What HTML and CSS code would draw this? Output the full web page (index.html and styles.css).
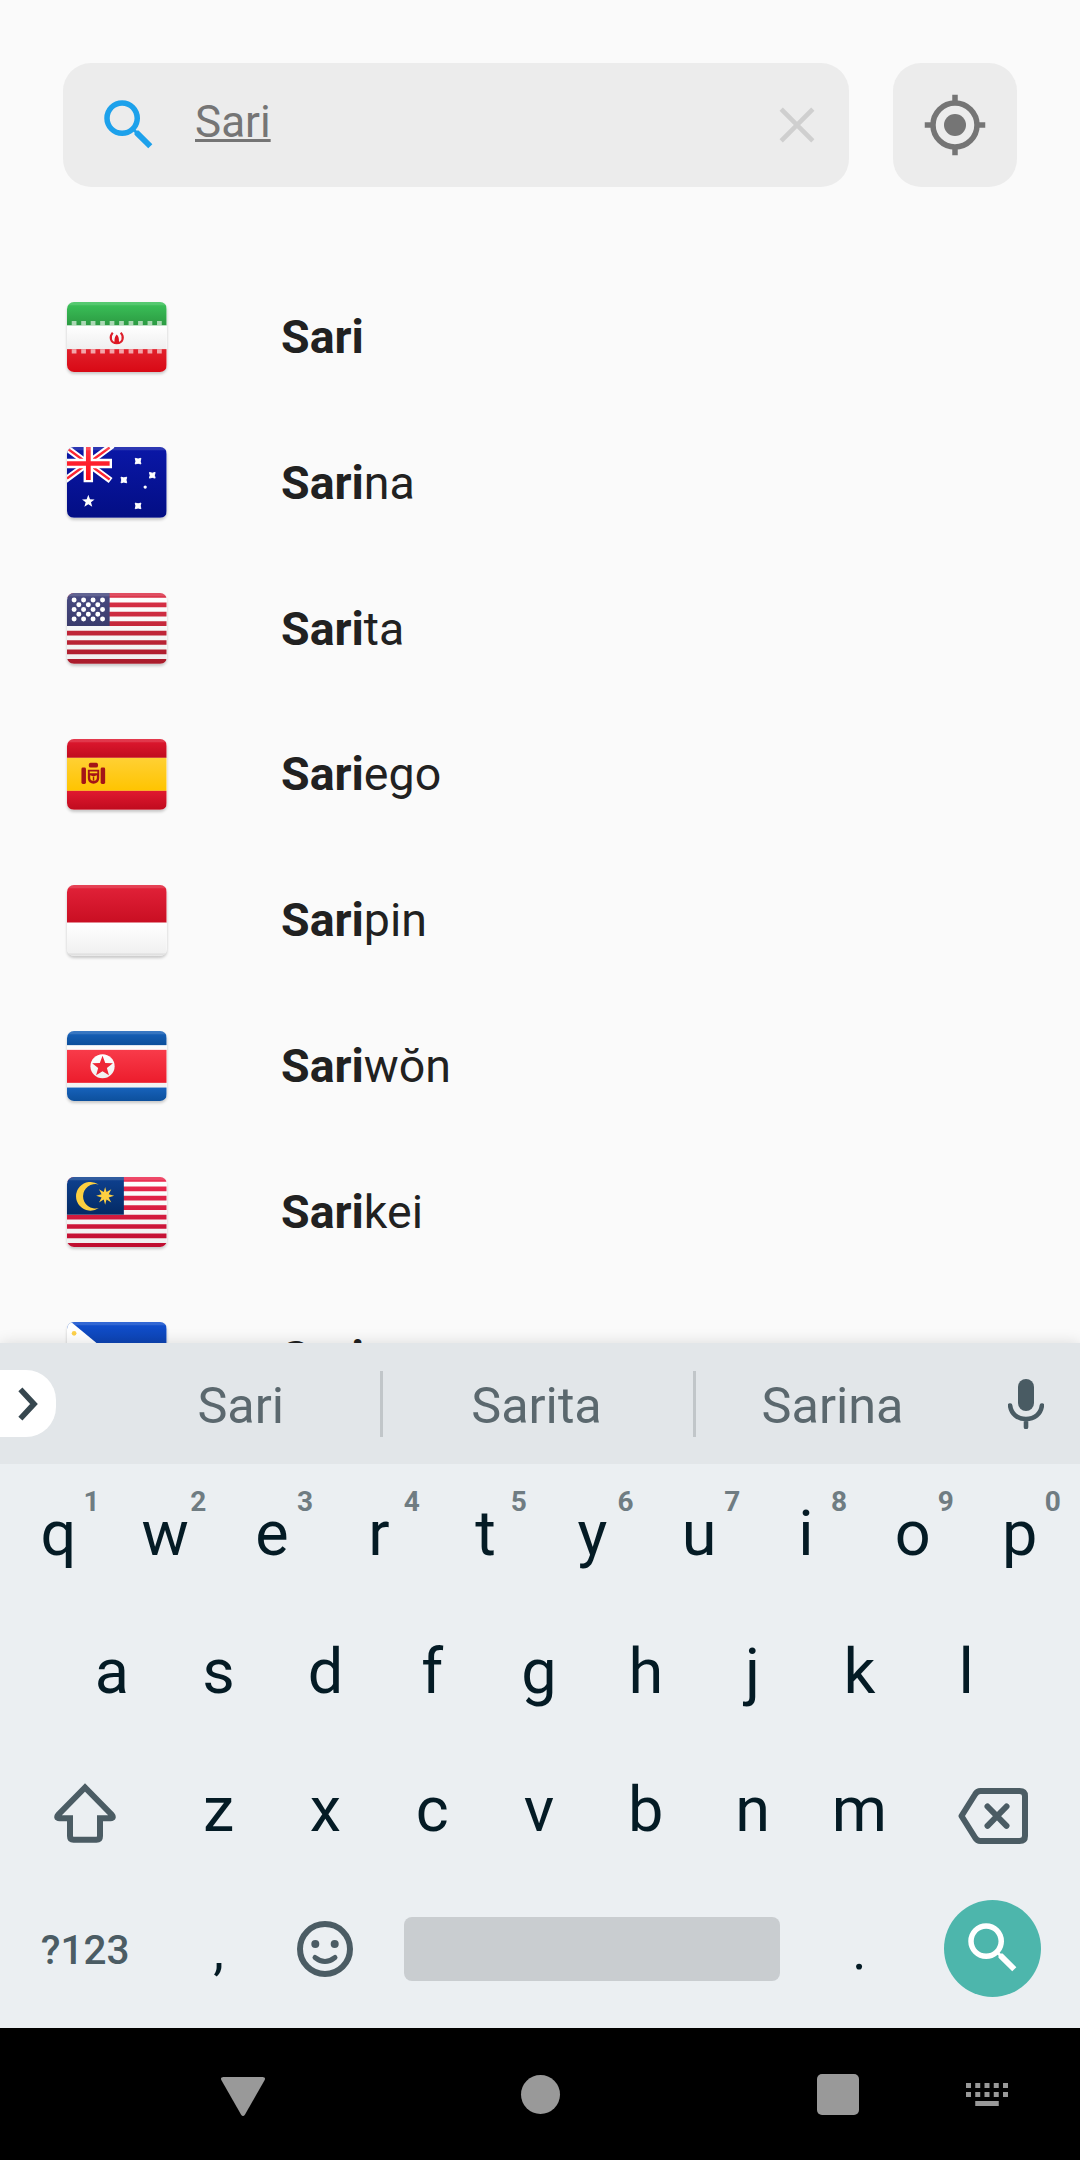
FILE: index.html
```html
<!DOCTYPE html>
<html lang="en">
<head>
<meta charset="utf-8">
<title>Location search</title>
<link rel="stylesheet" href="styles.css">
</head>
<body>
<svg class="defs" width="0" height="0" aria-hidden="true">
  <defs>
    <linearGradient id="white" x2="0" y2="1"><stop offset="0" stop-color="#fff"/><stop offset="1" stop-color="#efefef"/></linearGradient>
    <linearGradient id="green" x2="0" y2="1"><stop offset="0" stop-color="#3bc35a"/><stop offset="1" stop-color="#2c9a42"/></linearGradient>
    <linearGradient id="irred" x2="0" y2="1"><stop offset="0" stop-color="#e1202b"/><stop offset="1" stop-color="#d80814"/></linearGradient>
    <linearGradient id="navy" x2="0" y2="1"><stop offset="0" stop-color="#0a17a7"/><stop offset="1" stop-color="#030e84"/></linearGradient>
    <linearGradient id="brightred" x2="0" y2="1"><stop offset="0" stop-color="#ff323e"/><stop offset="1" stop-color="#fd0d1b"/></linearGradient>
    <linearGradient id="usred" gradientUnits="userSpaceOnUse" x1="0" y1="0" x2="0" y2="15"><stop offset="0" stop-color="#dc3248"/><stop offset="1" stop-color="#a91c2b"/></linearGradient>
    <linearGradient id="usblue" x2="0" y2="1"><stop offset="0" stop-color="#494b82"/><stop offset="1" stop-color="#3a3b6c"/></linearGradient>
    <linearGradient id="esred" x2="0" y2="1"><stop offset="0" stop-color="#e01930"/><stop offset="1" stop-color="#c00b1e"/></linearGradient>
    <linearGradient id="yellow" x2="0" y2="1"><stop offset="0" stop-color="#ffd034"/><stop offset="1" stop-color="#ffc400"/></linearGradient>
    <linearGradient id="idred" x2="0" y2="1"><stop offset="0" stop-color="#e22239"/><stop offset="1" stop-color="#c90e22"/></linearGradient>
    <linearGradient id="kpblue" x2="0" y2="1"><stop offset="0" stop-color="#1762bb"/><stop offset="1" stop-color="#0c4f9b"/></linearGradient>
    <linearGradient id="kpred" x2="0" y2="1"><stop offset="0" stop-color="#f83b4a"/><stop offset="1" stop-color="#ec1c2c"/></linearGradient>
    <linearGradient id="myred" gradientUnits="userSpaceOnUse" x1="0" y1="0" x2="0" y2="15"><stop offset="0" stop-color="#ed2b50"/><stop offset="1" stop-color="#be0d2f"/></linearGradient>
    <linearGradient id="myblue" x2="0" y2="1"><stop offset="0" stop-color="#0e4190"/><stop offset="1" stop-color="#042a64"/></linearGradient>
    <linearGradient id="phblue" x2="0" y2="1"><stop offset="0" stop-color="#1150cf"/><stop offset="1" stop-color="#0a3a9f"/></linearGradient>
    <path id="star" d="M0-1 .25-.34.95-.31.4.13.59.81 0 .42-.59.81-.4.13-.95-.31-.25-.34Z"/>
    <rect id="sheen" width="21" height=".7" fill="#fff" opacity=".14"/>
    <path id="search" d="M15.5 14h-.79l-.28-.27A6.47 6.47 0 0 0 16 9.5 6.5 6.5 0 1 0 9.5 16c1.61 0 3.09-.59 4.23-1.57l.27.28v.79l5 4.99L20.49 19l-4.99-5zm-6 0C7.01 14 5 11.99 5 9.5S7.01 5 9.5 5 14 7.01 14 9.5 11.99 14 9.5 14z"/>
  </defs>
</svg>

<header class="search-header">
  <div class="search-bar">
    <svg class="search-icon" viewBox="0 0 24 24"><use href="#search"/></svg>
    <span class="query">Sari</span>
    <svg class="clear-icon" viewBox="0 0 36 36"><path d="M2.2 2.2 33.8 33.8M33.8 2.2 2.2 33.8"/></svg>
  </div>
  <div class="locate">
    <svg viewBox="0 0 24 24"><path d="M11 1h2v3h-2zM11 20h2v3h-2zM1 11h3v2H1zM20 11h3v2h-3z"/><circle cx="12" cy="12" r="4"/><circle class="ring" cx="12" cy="12" r="8"/></svg>
  </div>
</header>

<main class="results">
  <div class="result">
    <svg class="flag" viewBox="0 0 21 15" preserveAspectRatio="none">
      <rect width="21" height="5" fill="url(#green)"/><rect y="5" width="21" height="5" fill="url(#white)"/><rect y="10" width="21" height="5" fill="url(#irred)"/>
      <path d="M1 4.5h20M1 10.5h20" stroke="#fff" stroke-opacity=".6" stroke-width=".9" stroke-dasharray="1 1"/>
      <path d="M9.65 6.5c-.75.9-.5 2.25.85 2.25s1.6-1.35.85-2.25" fill="none" stroke="#dd1f2b" stroke-width=".45"/><path d="M9.9 8.8c.3-.5-.1-1.2.6-1.9.7.7.3 1.4.6 1.9z" fill="#dd1420"/>
      <use href="#sheen"/>
    </svg>
    <span class="name"><b>Sari</b></span>
  </div>
  <div class="result">
    <svg class="flag" viewBox="0 0 21 15" preserveAspectRatio="none">
      <rect width="21" height="15" fill="url(#navy)"/>
      <path d="M-.6-.2 9.2 7.1M9.6-.4-.6 7.2" stroke="#fff" stroke-width="1.35"/>
      <path d="M0 .25 9 6.9M9 .1 0 6.7" stroke="#fb2733" stroke-width=".5"/>
      <path d="M0 3.5h9.5M4.5 0v7.5" stroke="#fff" stroke-width="2"/>
      <path d="M0 3h4V0h1v3h4v1H5v3H4V4H0z" fill="url(#brightred)"/>
      <g fill="#fff"><use href="#star" transform="translate(4.5 11.55) scale(1.4)"/><path d="m14.4 2.4.6.15.6-.15-.15.6.15.6-.6-.15-.6.15.15-.6zM17.4 5.4l.6.15.6-.15-.15.6.15.6-.6-.15-.6.15.15-.6zM11.4 6.4l.6.15.6-.15-.15.6.15.6-.6-.15-.6.15.15-.6zM14.4 11.9l.6.15.6-.15-.15.6.15.6-.6-.15-.6.15.15-.6z" stroke="#fff" stroke-width=".2"/><circle cx="16.5" cy="8.5" r=".35"/></g>
      <use href="#sheen"/>
    </svg>
    <span class="name"><b>Sari</b>na</span>
  </div>
  <div class="result">
    <svg class="flag" viewBox="0 0 21 15" preserveAspectRatio="none">
      <rect width="21" height="15" fill="url(#white)"/>
      <path d="M0 0h21v1H0zM0 2h21v1H0zM0 4h21v1H0zM0 6h21v1H0zM0 8h21v1H0zM0 10h21v1H0zM0 12h21v1H0zM0 14h21v1H0z" fill="url(#usred)"/>
      <rect width="9" height="7" fill="url(#usblue)"/>
      <path d="M1.5 1.5h6.1M1.5 3.5h6.1M1.5 5.5h6.1M2.5 2.5h4.1M2.5 4.5h4.1" stroke="#fff" stroke-width="1.05" stroke-linecap="round" stroke-dasharray="0 2"/>
      <use href="#sheen"/>
    </svg>
    <span class="name"><b>Sari</b>ta</span>
  </div>
  <div class="result">
    <svg class="flag" viewBox="0 0 21 15" preserveAspectRatio="none">
      <rect width="21" height="4" fill="url(#esred)"/><rect y="4" width="21" height="7" fill="url(#yellow)"/><rect y="11" width="21" height="4" fill="url(#esred)"/>
      <g fill="#a41517"><rect x="3.05" y="6.05" width=".95" height="3.5" rx=".3"/><rect x="7.1" y="6.05" width=".95" height="3.5" rx=".3"/><rect x="4.6" y="5.05" width="1.95" height="1" rx=".4"/><path fill-rule="evenodd" d="M4.4 6.5h2.4v1.8c0 1.6-2.4 1.6-2.4 0zm.4.4v.35h1.6V6.9zm.1.8v.5c0 .9 1.4.9 1.4 0v-.5l-.7.25z"/><path d="M5.45 8h.3v.8h-.3z"/></g>
      <use href="#sheen"/>
    </svg>
    <span class="name"><b>Sari</b>ego</span>
  </div>
  <div class="result">
    <svg class="flag" viewBox="0 0 21 15" preserveAspectRatio="none">
      <rect width="21" height="8" fill="url(#idred)"/><rect y="8" width="21" height="7" fill="url(#white)"/>
      <rect y="14.5" width="21" height=".5" opacity=".06"/><use href="#sheen"/>
    </svg>
    <span class="name"><b>Sari</b>pin</span>
  </div>
  <div class="result">
    <svg class="flag" viewBox="0 0 21 15" preserveAspectRatio="none">
      <rect width="21" height="15" fill="url(#white)"/><rect width="21" height="3" fill="url(#kpblue)"/><rect y="4" width="21" height="7" fill="url(#kpred)"/><rect y="12" width="21" height="3" fill="url(#kpblue)"/>
      <circle cx="7.5" cy="7.5" r="2.55" fill="url(#white)"/><use href="#star" transform="translate(7.5 7.55) scale(2.3)" fill="#ee2636"/>
      <use href="#sheen"/>
    </svg>
    <span class="name"><b>Sari</b>wŏn</span>
  </div>
  <div class="result">
    <svg class="flag" viewBox="0 0 21 15" preserveAspectRatio="none">
      <rect width="21" height="15" fill="url(#white)"/>
      <path d="M0 0h21v1H0zM0 2h21v1H0zM0 4h21v1H0zM0 6h21v1H0zM0 8h21v1H0zM0 10h21v1H0zM0 12h21v1H0zM0 14h21v1H0z" fill="url(#myred)"/>
      <rect width="12" height="8" fill="url(#myblue)"/>
      <path d="M6.7 1.6A3.05 3.05 0 1 0 6.7 6.6 2.6 2.6 0 1 1 6.7 1.6z" fill="#fdcf41"/>
      <path d="m8.05 2.1.3 1.1 1-.6-.55 1.05 1.15.35-1.15.35.55 1.05-1-.6-.3 1.1-.3-1.1-1 .6.55-1.05L6.15 4l1.15-.35-.55-1.05 1 .6z" fill="#fdcf41"/>
      <use href="#sheen"/>
    </svg>
    <span class="name"><b>Sari</b>kei</span>
  </div>
  <div class="result">
    <svg class="flag" viewBox="0 0 21 15" preserveAspectRatio="none">
      <rect width="21" height="7.5" fill="url(#phblue)"/><rect y="7.5" width="21" height="7.5" fill="#d01329"/>
      <use href="#sheen"/><path d="M0-.3h.5l9.4 7.8-9.4 7.8H0z" fill="#fff"/>
      <circle cx="1.5" cy="2.4" r=".5" fill="#fdd14a"/>
    </svg>
    <span class="name"><b>Sari</b>aya</span>
  </div>
</main>

<section class="keyboard">
  <div class="suggestions">
    <div class="expand"><svg viewBox="0 0 20 34"><path d="M2.4 2.4 16 17 2.4 31.6"/></svg></div>
    <div class="word first">Sari</div>
    <div class="divider"></div>
    <div class="word second">Sarita</div>
    <div class="divider"></div>
    <div class="word third">Sarina</div>
    <svg class="mic" viewBox="0 0 36 50"><rect x="10" y="0" width="16" height="32" rx="8"/><path d="M2.1 26.5C3.2 35 9.6 40 18 40s14.8-5 15.9-13.5M18 40v8"/></svg>
  </div>
  <div class="keys">
    <div class="row">
      <div class="key">q<span class="hint">1</span></div><div class="key">w<span class="hint">2</span></div><div class="key">e<span class="hint">3</span></div><div class="key">r<span class="hint">4</span></div><div class="key">t<span class="hint">5</span></div><div class="key">y<span class="hint">6</span></div><div class="key">u<span class="hint">7</span></div><div class="key">i<span class="hint">8</span></div><div class="key">o<span class="hint">9</span></div><div class="key">p<span class="hint">0</span></div>
    </div>
    <div class="row">
      <div class="key">a</div><div class="key">s</div><div class="key">d</div><div class="key">f</div><div class="key">g</div><div class="key">h</div><div class="key">j</div><div class="key">k</div><div class="key">l</div>
    </div>
    <div class="row">
      <div class="key wide"><svg class="shift" viewBox="0 0 62 60"><path d="M31 4.5 4.5 31.5Q1.5 35.2 5.5 35.2H16V53Q16 56.8 19.5 56.8H42.5Q46 56.8 46 53V35.2H56.5Q60.5 35.2 57.5 31.5Z"/></svg></div>
      <div class="key">z</div><div class="key">x</div><div class="key">c</div><div class="key">v</div><div class="key">b</div><div class="key">n</div><div class="key">m</div>
      <div class="key wide"><svg class="backspace" viewBox="0 0 70 56"><path d="M3.5 28 17 6.5Q19 3 22.5 3H61.5Q67 3 67 8V48Q67 53 61.5 53H22.5Q19 53 17 49.5ZM29.5 18.5 48.5 37.8M48.5 18.5 29.5 37.8"/></svg></div>
    </div>
    <div class="row bottom">
      <div class="key wide symbols">?123</div>
      <div class="key punct">,</div>
      <div class="key"><svg class="emoji" viewBox="0 0 56 56"><circle class="face" cx="28" cy="28" r="25"/><circle cx="18.3" cy="23" r="4"/><circle cx="37.7" cy="23" r="4"/><path d="M18 36.5Q28 44.5 38 36.5"/></svg></div>
      <div class="key space"><div class="bar"></div></div>
      <div class="key punct">.</div>
      <div class="key wide"><div class="go"><svg viewBox="0 0 24 24"><use href="#search"/></svg></div></div>
    </div>
  </div>
</section>

<nav class="navbar">
  <svg class="nav-back" viewBox="0 0 46 40"><path d="M3.5 1H42.5Q46 1 44.7 4L25 38.5Q23 41.5 21 38.5L1.3 4Q0 1 3.5 1Z"/></svg>
  <div class="nav-home"></div>
  <div class="nav-recent"></div>
  <svg class="nav-keyboard" viewBox="0 0 42 23"><path d="M0 0h5v5H0zM9.25 0h5v5h-5zM18.5 0h5v5h-5zM27.75 0h5v5h-5zM37 0h5v5h-5zM0 9h5v5H0zM9.25 9h5v5h-5zM18.5 9h5v5h-5zM27.75 9h5v5h-5zM37 9h5v5h-5zM9.25 18h23.5v5H9.25z"/></svg>
</nav>
</body>
</html>
```
FILE: styles.css
```css
* { box-sizing: border-box; }

body {
  margin: 0;
  width: 1080px;
  height: 2160px;
  display: flex;
  flex-direction: column;
  overflow: hidden;
  background: #fafafa;
  color: #212121;
  font-family: Roboto, sans-serif;
}

svg { display: block; flex: none; }
.defs { position: absolute; }

/* Search header */
.search-header {
  display: flex;
  gap: 44px;
  padding: 63px 63px 0;
}
.search-bar, .locate {
  height: 124px;
  border-radius: 28px;
  background: #ececec;
  display: flex;
  align-items: center;
}
.search-bar { width: 786px; padding: 0 34px 0 33px; }
.search-icon { width: 66px; height: 66px; fill: #1da1eb; }
.query {
  flex: 1;
  margin: -6px 0 0 33px;
  font-size: 44px;
  line-height: 52px;
  color: #757575;
  text-decoration: underline;
  text-decoration-thickness: 3px;
  text-underline-offset: 2px;
  text-decoration-skip-ink: none;
}
.clear-icon { width: 36px; height: 36px; fill: none; stroke: #cfcfcf; stroke-width: 4.6; }
.locate { width: 124px; justify-content: center; }
.locate svg { width: 66px; height: 66px; fill: #757575; }
.locate .ring { fill: none; stroke: #757575; stroke-width: 2; }

/* Results */
.results {
  flex: 1;
  min-height: 0;
  overflow: hidden;
  padding: 77px 0 0 67px;
}
.result {
  height: 145.85px;
  display: flex;
  align-items: center;
}
.flag {
  width: 99.5px;
  height: 70.7px;
  border-radius: 7px;
  box-shadow: 0 2px 3px rgba(0, 0, 0, .2);
}
.name { margin-left: 114.5px; font-size: 46.5px; line-height: 54px; }
.name b { font-weight: 700; }

/* Keyboard */
.keyboard {
  position: relative;
  height: 685px;
  background: #ebeff2;
  box-shadow: 0 0 14px rgba(0, 0, 0, .13);
}
.suggestions {
  height: 121px;
  display: flex;
  align-items: center;
  background: #e2e6e9;
}
.expand {
  width: 55.5px;
  height: 67px;
  border-radius: 0 30px 30px 0;
  background: #fff;
  display: flex;
  align-items: center;
  padding: 0 0 0 17.5px;
}
.expand svg { width: 20px; height: 34px; fill: none; stroke: #37474f; stroke-width: 5.6; }
.word {
  font-size: 50.4px;
  line-height: 60px;
  margin-top: 4px;
  color: #5b686e;
  text-align: center;
}
.first { width: 324.5px; padding-left: 46px; }
.second { width: 310px; padding-right: 3px; }
.third { width: 272px; padding-left: 1px; }
.divider { width: 3px; height: 66px; background: #c1c6c9; }
.mic { width: 36px; height: 50px; margin-left: 39.5px; fill: #495b63; stroke: none; }
.mic path { fill: none; stroke: #495b63; stroke-width: 4.6; stroke-linecap: round; }

.row { height: 138.4px; display: flex; justify-content: center; padding-right: 2px; }
.bottom { padding-top: 1px; }
.key {
  position: relative;
  width: 106.8px;
  display: flex;
  align-items: center;
  justify-content: center;
  font-size: 63px;
  color: #041b25;
}
.key svg { fill: none; stroke: #4b5c64; stroke-width: 6; stroke-linejoin: round; stroke-linecap: round; }
.hint {
  position: absolute;
  top: 24px;
  left: 66.5px;
  width: 40px;
  text-align: center;
  font-size: 28px;
  line-height: 28px;
  font-weight: 700;
  color: #6f7c82;
}
.wide { width: 160.2px; }
.key .shift { width: 62px; height: 60px; margin-top: 6px; stroke-linejoin: miter; }
.key .backspace { width: 70px; height: 56px; margin-top: 13px; }
.symbols { font-size: 40.5px; font-weight: 500; color: #4b5c64; padding-top: 2px; }
.punct { font-size: 54px; padding-top: 4px; }
.key .emoji { width: 56px; height: 56px; fill: #4b5c64; stroke: none; }
.emoji .face, .emoji path { fill: none; stroke: #4b5c64; stroke-width: 6; }
.emoji path { stroke-width: 5; }
.space { width: 427.2px; }
.bar { width: 376px; height: 64px; border-radius: 8px; background: #c9cdd0; }
.go {
  width: 97px;
  height: 97px;
  border-radius: 50%;
  background: #4db6ac;
  display: flex;
  align-items: center;
  justify-content: center;
}
.key .go svg { width: 66px; height: 66px; margin-top: -2px; fill: #fff; stroke: none; }

/* System navigation */
.navbar {
  height: 132px;
  display: flex;
  align-items: center;
  padding: 0 72.5px 0 219.5px;
  background: #000;
}
.nav-back { width: 46px; height: 40px; fill: #999; margin-top: 4px; }
.nav-home { width: 39px; height: 39px; border-radius: 50%; background: #999; margin-left: 255.5px; }
.nav-recent { width: 42px; height: 41px; border-radius: 5px; background: #999; margin-left: 256.5px; margin-top: 1px; }
.nav-keyboard { width: 42px; height: 23px; fill: #999; margin-left: auto; margin-top: 1px; }
```
